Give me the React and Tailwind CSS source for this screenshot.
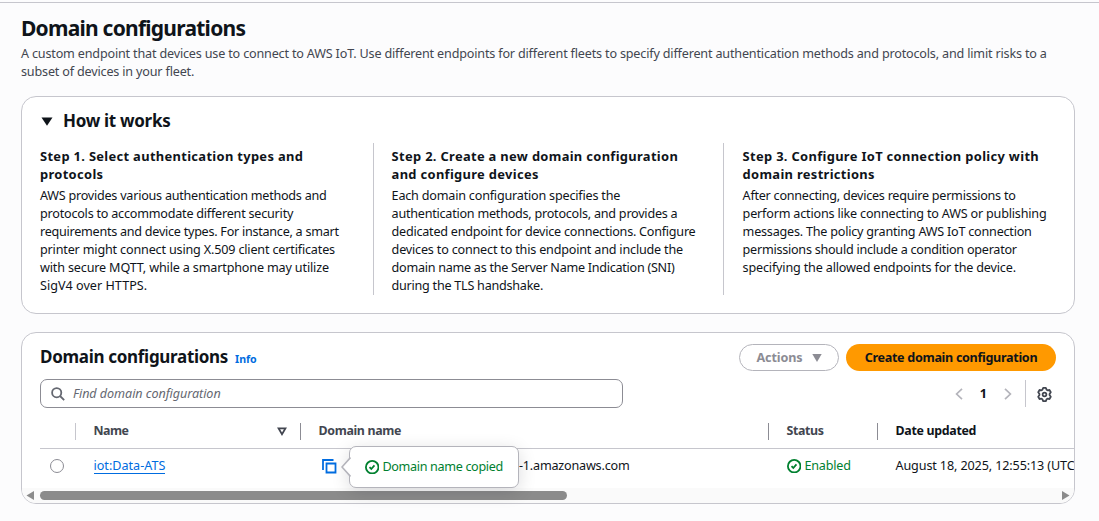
import React from "react";

const steps = [
  {
    title: ["Step 1. Select authentication types and", "protocols"],
    body: [
      ["AWS provides various authentication methods and", "tracking-[-0.24px]"],
      ["protocols to accommodate different security", "tracking-[-0.22px]"],
      ["requirements and device types. For instance, a smart", "tracking-[-0.26px]"],
      ["printer might connect using X.509 client certificates", "tracking-[-0.17px]"],
      ["with secure MQTT, while a smartphone may utilize", "tracking-[-0.16px]"],
      ["SigV4 over HTTPS.", "tracking-[0.02px]"],
    ],
    box: "w-[333px]",
  },
  {
    title: ["Step 2. Create a new domain configuration", "and configure devices"],
    body: [
      ["Each domain configuration specifies the", "tracking-[-0.2px]"],
      ["authentication methods, protocols, and provides a", "tracking-[-0.24px]"],
      ["dedicated endpoint for device connections. Configure", "tracking-[-0.24px]"],
      ["devices to connect to this endpoint and include the", "tracking-[-0.19px]"],
      ["domain name as the Server Name Indication (SNI)", "tracking-[-0.27px]"],
      ["during the TLS handshake.", "tracking-[-0.25px]"],
    ],
    box: "w-[350px] border-l border-[#c6c6cd] pl-[17.6px]",
  },
  {
    title: ["Step 3. Configure IoT connection policy with", "domain restrictions"],
    body: [
      ["After connecting, devices require permissions to", "tracking-[-0.25px]"],
      ["perform actions like connecting to AWS or publishing", "tracking-[-0.19px]"],
      ["messages. The policy granting AWS IoT connection", "tracking-[-0.22px]"],
      ["permissions should include a condition operator", "tracking-[-0.25px]"],
      ["specifying the allowed endpoints for the device.", "tracking-[-0.17px]"],
    ],
    box: "flex-1 border-l border-[#c6c6cd] pl-[18.6px]",
  },
];

function CheckCircle() {
  return (
    <svg className="h-[14.4px] w-[14.4px] shrink-0" viewBox="0 0 16 16" fill="none" stroke="#00802f" strokeWidth="2">
      <circle cx="8" cy="8" r="7" />
      <path d="M5 8l2 2 3.500-4" />
    </svg>
  );
}

function Column({ className, children }) {
  return <div className={"flex h-[17px] shrink-0 items-center whitespace-nowrap text-[12.4px] font-bold " + className}>{children}</div>;
}

function HowItWorks() {
  return (
    <section className="mt-4 h-[218px] rounded-[15px] border border-[#c6c6cd] bg-white pl-[18px] pr-[18px]">
      <div className="flex h-[46px] items-center pt-[2px]">
        <svg className="ml-px mt-px h-[9px] w-[12px]" viewBox="0 0 12 9"><path d="M0.5 0.5h11L6 8.7z" fill="#0f141a" /></svg>
        <h2 className="ml-[10px] text-[17px] font-bold leading-[22px] tracking-[-0.3px]">How it works</h2>
      </div>
      <div className="flex h-[152px]">
        {steps.map((s) => (
          <div key={s.title[0]} className={"shrink-0 whitespace-nowrap pt-[4px] " + s.box}>
            {s.title.map((t) => (
              <div key={t} className="text-[12.9px] font-bold leading-[18px] tracking-[0.33px]">{t}</div>
            ))}
            <div className="mt-[4px]">
              {s.body.map(([t, tracking]) => <div key={t} className={"leading-[18px] " + tracking}>{t}</div>)}
            </div>
          </div>
        ))}
      </div>
    </section>
  );
}

function CopiedPopover() {
  return (
    <div className="absolute left-[328px] top-[-3px] z-10 flex h-[42px] w-[170px] items-center rounded-[7px] border border-[#b4b4bb] bg-white pl-[15px] shadow-[0_4px_18px_rgba(0,7,22,0.14)]">
      <svg className="absolute left-[-9px] top-[10px] h-[20px] w-[10px]" viewBox="0 0 10 20">
        <path d="M9.5 0.5L1 10l8.5 9.5" fill="#fff" stroke="#b4b4bb" strokeWidth="1.6" />
      </svg>
      <CheckCircle />
      <span className="ml-[3px] whitespace-nowrap tracking-[-0.33px] text-[#00802f]">Domain name copied</span>
    </div>
  );
}

function DomainTable() {
  return (
    <section className="relative mt-[18px] flex h-[172px] flex-col overflow-hidden rounded-[15px] border border-[#c6c6cd] bg-white">
      <div className="mt-[11px] flex h-[27px] shrink-0 items-center pl-[18px] pr-[18px]">
        <h2 className="-mt-[2px] whitespace-nowrap text-[17px] font-bold leading-[22px] tracking-[-0.3px]">Domain configurations</h2>
        <a className="ml-[7px] mt-[3px] text-[10.6px] font-bold leading-4 tracking-[-0.1px] text-[#006ce0]">Info</a>
        <button className="ml-auto flex h-[27px] w-[100px] items-center justify-center gap-[9px] rounded-full border border-[#b4b4bb] pt-px font-bold tracking-[-0.1px] text-[#8c8c94]">
          Actions
          <svg className="h-[8px] w-[10px]" viewBox="0 0 10 8"><path d="M0.3 0h9.4L5 8z" fill="#8c8c94" /></svg>
        </button>
        <button className="ml-[7px] h-[27px] w-[210px] whitespace-nowrap rounded-full bg-[#ff9900] pt-px font-bold tracking-[-0.32px]">
          Create domain configuration
        </button>
      </div>
      <div className="mt-2 flex h-[29px] shrink-0 items-center pl-[18px] pr-[18px]">
        <div className="flex h-[29px] w-[583px] items-center rounded-[7px] border border-[#8c8c94] pl-[10px]">
          <svg className="h-[14px] w-[14px]" viewBox="0 0 14 14" fill="none" stroke="#656871" strokeWidth="1.8">
            <circle cx="5.7" cy="5.7" r="4.6" /><path d="M9 9l4.2 4.2" />
          </svg>
          <span className="ml-[8px] pt-px italic text-[#656871] tracking-[-0.06px]">Find domain configuration</span>
        </div>
        <svg className="ml-auto mt-px h-[12px] w-[8px]" viewBox="0 0 8 12" fill="none" stroke="#b4b4bb" strokeWidth="1.7"><path d="M7 0.8L1.6 6 7 11.2" /></svg>
        <span className="ml-[17px] pt-px font-bold">1</span>
        <svg className="ml-[17px] mt-px h-[12px] w-[8px]" viewBox="0 0 8 12" fill="none" stroke="#b4b4bb" strokeWidth="1.7"><path d="M1 0.8L6.400 6 1 11.2" /></svg>
        <div className="ml-[13px] h-[27px] w-px bg-[#c6c6cd]" />
        <svg className="ml-[11px] mr-[4px] mt-px h-[15px] w-[15px]" viewBox="0 0 16 16" fill="none" stroke="#424650" strokeWidth="1.9" strokeLinejoin="round">
          <path d="M6.600 1h2.800l.8 1.900 1 .6 2.100-.3 1.400 2.400L13.400 7.400v1.200l1.300 1.800-1.400 2.400-2.100-.3-1 .6-.8 1.900H6.600l-.8-1.900-1-.6-2.100.3-1.400-2.400L2.600 8.600V7.400L1.300 5.600l1.400-2.400 2.100.3 1-.6z" />
          <circle cx="8" cy="8" r="2" />
        </svg>
      </div>
      <div className="ml-[18px] mt-[15px] flex h-[26px] shrink-0 border-b border-[#c6c6cd] text-[#424650]">
        <Column className="w-[35px]" />
        <Column className="w-[225px] border-l border-[#c6c6cd] pl-[17.5px] tracking-[-0.5px]">
          Name
          <svg className="ml-auto mr-[13px] h-[9px] w-[10px]" viewBox="0 0 10 9"><path d="M1.500 1.300h7L5 7.300z" fill="none" stroke="#424650" strokeWidth="1.700" /></svg>
        </Column>
        <Column className="w-[468px] border-l border-[#8c8c94] pl-[17.5px] tracking-[-0.33px]">Domain name</Column>
        <Column className="w-[109px] border-l border-[#8c8c94] pl-[17.5px] tracking-[-0.35px]">Status</Column>
        <Column className="border-l border-[#8c8c94] pl-[17.5px] tracking-[-0.3px] text-[#0f141a]">Date updated</Column>
      </div>
      <div className="flex h-[34px] shrink-0 items-center whitespace-nowrap pl-[28px]">
        <span className="h-[14px] w-[14px] shrink-0 rounded-full border border-[#8c8c94]" />
        <div className="w-[229px] shrink-0 pl-[29.5px]">
          <a className="inline-block border-b border-[#006ce0] leading-[15px] tracking-[0px] text-[#006ce0]">iot:Data-ATS</a>
        </div>
        <svg className="ml-[29px] h-[15px] w-[15px] shrink-0" viewBox="0 0 15 15" fill="none" stroke="#006ce0" strokeWidth="1.800">
          <path d="M1 11V1h10.500" /><path d="M4.500 4.500h9v9h-9z" />
        </svg>
        <div className="w-[294px] shrink-0 pl-[182px] tracking-[-0.2px]">-1.amazonaws.com</div>
        <div className="ml-[156px] flex w-[108.500px] shrink-0 items-center gap-[3px] tracking-[-0.2px] text-[#00802f]"><CheckCircle />Enabled</div>
        <div className="tracking-[-0.12px]">August 18, 2025, 12:55:13 (UTC-04:00)</div>
      </div>
      <div className="mt-auto flex h-[15px] shrink-0 items-center bg-[#fafafa] pl-[4px] pr-[4px]">
        <svg className="h-[9px] w-[8px]" viewBox="0 0 8 9"><path d="M8 0v9L0.500 4.500z" fill="#8b8b8b" /></svg>
        <div className="ml-[6px] h-[9px] w-[527px] rounded-full bg-[#8b8b8b]" />
        <svg className="ml-auto h-[9px] w-[8px]" viewBox="0 0 8 9"><path d="M0 0v9l7.500-4.500z" fill="#8b8b8b" /></svg>
      </div>
    </section>
  );
}

export default function App() {
  return (
    <main className="h-[521px] w-[1099px] overflow-hidden bg-[#fcfcfd] pt-[2px] font-['Noto_Sans',sans-serif] text-[12.6px] text-[#0f141a]">
      <div className="h-px bg-[#c6c6cd]" />
      <div className="pl-[21px] pr-[24px]">
        <h1 className="mt-[10px] text-[21px] font-bold leading-[30px] tracking-[-0.76px]">Domain configurations</h1>
        <p className="mt-[2px] h-[35px] whitespace-nowrap leading-[18px] tracking-[-0.175px] text-[#424650]">
          A custom endpoint that devices use to connect to AWS IoT. Use different endpoints for different fleets to specify different authentication methods and protocols, and limit risks to a
          <br />
          subset of devices in your fleet.
        </p>
        <HowItWorks />
        <div className="relative">
          <DomainTable />
          <div className="absolute left-0 top-[117px]"><CopiedPopover /></div>
        </div>
      </div>
    </main>
  );
}
